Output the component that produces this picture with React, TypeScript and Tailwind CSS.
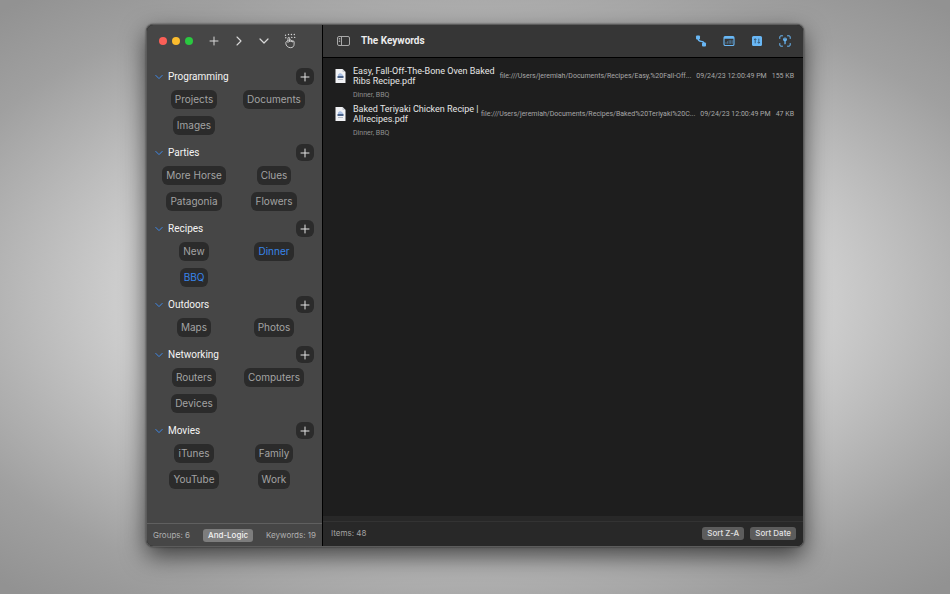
import React from "react";

type Keyword = { name: string; active?: boolean };
type Group = { name: string; keywords: Keyword[] };
type FileItem = {
  title: string[];
  tags: string;
  path: string;
  date: string;
  size: string;
};

const groups: Group[] = [
  { name: "Programming", keywords: [{ name: "Projects" }, { name: "Documents" }, { name: "Images" }] },
  { name: "Parties", keywords: [{ name: "More Horse" }, { name: "Clues" }, { name: "Patagonia" }, { name: "Flowers" }] },
  { name: "Recipes", keywords: [{ name: "New" }, { name: "Dinner", active: true }, { name: "BBQ", active: true }] },
  { name: "Outdoors", keywords: [{ name: "Maps" }, { name: "Photos" }] },
  { name: "Networking", keywords: [{ name: "Routers" }, { name: "Computers" }, { name: "Devices" }] },
  { name: "Movies", keywords: [{ name: "iTunes" }, { name: "Family" }, { name: "YouTube" }, { name: "Work" }] },
];

const files: FileItem[] = [
  {
    title: ["Easy, Fall-Off-The-Bone Oven Baked", "Ribs Recipe.pdf"],
    tags: "Dinner, BBQ",
    path: "file:///Users/jeremiah/Documents/Recipes/Easy,%20Fall-Off...",
    date: "09/24/23 12:00:49 PM",
    size: "155 KB",
  },
  {
    title: ["Baked Teriyaki Chicken Recipe |", "Allrecipes.pdf"],
    tags: "Dinner, BBQ",
    path: "file:///Users/jeremiah/Documents/Recipes/Baked%20Teriyaki%20C...",
    date: "09/24/23 12:00:49 PM",
    size: "47 KB",
  },
];

function Plus({ className }: { className: string }) {
  return (
    <svg viewBox="0 0 10 10" className={className} fill="none" stroke="currentColor" strokeLinecap="round" aria-hidden="true">
      <path d="M5 1v8M1 5h8" />
    </svg>
  );
}

function ChevronRight() {
  return (
    <svg viewBox="0 0 10 10" className="size-[10px]" fill="none" stroke="currentColor" strokeWidth="1.1" strokeLinecap="round" strokeLinejoin="round" aria-hidden="true">
      <path d="M3 1l4 4-4 4" />
    </svg>
  );
}

function ChevronDown({ className }: { className: string }) {
  return (
    <svg viewBox="0 0 10 10" className={className} fill="none" stroke="currentColor" strokeWidth="1.2" strokeLinecap="round" strokeLinejoin="round" aria-hidden="true">
      <path d="M1 3l4 4 4-4" />
    </svg>
  );
}

function TapHand() {
  return (
    <svg viewBox="0 0 12 16" className="h-4 w-3" fill="none" stroke="currentColor" strokeWidth="0.9" strokeLinecap="round" strokeLinejoin="round" aria-hidden="true">
      <path d="M4 9.500V5.200a.8.800 0 0 1 1.600 0v3.200M5.600 8.400V7.600a.8.800 0 0 1 1.600 0v1M7.200 8.600V8a.8.800 0 0 1 1.500 0v.8M8.700 8.800a.7.700 0 0 1 1.400 0v2.400c0 2.200-1.400 3.500-3.400 3.500-2.800 0-4.900-2-4.900-4.500 0-1.300.8-2.200 2.200-2.600" />
      <g fill="currentColor" stroke="none">
        <circle cx="1.500" cy="2.200" r=".7" />
        <circle cx="4.500" cy="1.500" r=".7" />
        <circle cx="7.400" cy="1.500" r=".7" />
        <circle cx="10.300" cy="1.500" r=".7" />
        <circle cx="1.800" cy="4.800" r=".7" />
        <circle cx="7.800" cy="4.400" r=".7" />
        <circle cx="10.700" cy="4.400" r=".7" />
      </g>
    </svg>
  );
}

function SidebarIcon() {
  return (
    <svg viewBox="0 0 13 10" className="h-[10px] w-[13px]" fill="none" stroke="currentColor" strokeWidth="1" aria-hidden="true">
      <rect x=".5" y=".5" width="12" height="9" rx="1.500" />
      <path d="M4.500.5v9M1.800 2.500h1.400M1.800 4h1.400M1.800 5.500h1.400" />
    </svg>
  );
}

function PathIcon() {
  return (
    <svg viewBox="0 0 12 12" className="size-3" fill="currentColor" aria-hidden="true">
      <rect x="1" y=".5" width="4" height="4" rx="1" />
      <rect x="7" y="7.500" width="4" height="4" rx="1" />
      <path d="M3 3.500c0 5 6 1 6 5" fill="none" stroke="currentColor" strokeWidth="1.200" />
    </svg>
  );
}

function CalendarIcon() {
  return (
    <svg viewBox="0 0 12 12" className="size-3" fill="none" stroke="currentColor" aria-hidden="true">
      <rect x="1" y="1.500" width="10" height="9" rx="1.300" strokeWidth="1.100" />
      <path d="M1 2.800h10" strokeWidth="2" />
      <path d="M3 8.800V7.200M4.600 8.800V6.200M6.200 8.800V5.200M7.700 8.800V5.200M9.200 8.800V5.200" strokeWidth=".8" opacity=".6" />
    </svg>
  );
}

function SortIcon() {
  return (
    <svg viewBox="0 0 12 12" className="size-3" fill="none" aria-hidden="true">
      <rect x="1" y="1" width="10" height="10" rx="1.500" fill="currentColor" />
      <path d="M4.200 8.300V3.800M3 5l1.200-1.300L5.400 5M7.800 3.700v4.500M6.600 7l1.200 1.300L9 7" stroke="#2f4a60" strokeWidth=".8" />
    </svg>
  );
}

function KeyScanIcon() {
  return (
    <svg viewBox="0 0 12 12" className="size-3" fill="none" stroke="currentColor" strokeLinecap="round" aria-hidden="true">
      <path d="M.8 3.500V2A1.200 1.200 0 0 1 2 .8h1.500M8.500.8H10A1.200 1.200 0 0 1 11.200 2v1.500M11.200 8.500V10a1.200 1.200 0 0 1-1.200 1.200H8.500M3.500 11.200H2A1.200 1.200 0 0 1 .8 10V8.500" />
      <path d="M5.400 5.500h1.300v3.200l-.7.8-.6-.6z" fill="currentColor" stroke="none" />
      <circle cx="6" cy="4.400" r="1.900" fill="currentColor" stroke="none" />
      <circle cx="6" cy="3.700" r=".5" fill="#363636" stroke="none" />
    </svg>
  );
}

function PdfIcon() {
  return (
    <svg viewBox="0 0 11 14" className="h-[14px] w-[11px] shrink-0" aria-hidden="true">
      <path d="M.5 0h7L10.500 3v11H.5z" fill="#f1f2f5" />
      <path d="M7.500 0v3h3z" fill="#c9ccd2" />
      <path d="M3 5.500 5 4l2 1 1.200 1.500V8H3z" fill="#a9bfe2" />
      <rect x="2.500" y="7" width="6" height="2" fill="#4a6288" />
      <path d="M3 10h5v1H3z" fill="#b4bac6" />
    </svg>
  );
}

function GroupSection({ group }: { group: Group }) {
  return (
    <section>
      <div className="flex h-[17px] items-center">
        <button type="button" className="flex flex-1 items-center gap-1 text-left font-['Roboto','Inter',sans-serif] text-[10px] leading-[17px] text-[#f4f4f4]">
          <ChevronDown className="mx-px size-2 text-[#3f8cf0]" />
          <h2>{group.name}</h2>
        </button>
        <button type="button" aria-label={`Add keyword to ${group.name}`} className="flex h-[17px] w-[18px] items-center justify-center rounded-[6px] bg-[#2b2b2b] text-[#e4e4e4]">
          <Plus className="size-[10px]" />
        </button>
      </div>
      <ul className="mt-[5px] grid grid-cols-2 gap-y-[7px]">
        {group.keywords.map((k) => (
          <li key={k.name} className="flex justify-center">
            <button
              type="button"
              aria-pressed={!!k.active}
              className={`h-[19px] rounded-[6px] bg-[#2b2b2b] px-1 text-[10px] leading-[19px] whitespace-nowrap ${k.active ? "text-[#3885ea]" : "text-[#a3a3a3]"}`}
            >
              {k.name}
            </button>
          </li>
        ))}
      </ul>
    </section>
  );
}

function FileRow({ file }: { file: FileItem }) {
  return (
    <li className="flex items-start gap-[7px] font-['Roboto','Inter',sans-serif]">
      <div className="flex min-w-0 flex-1 gap-[7px]">
        <div className="pt-[3px]">
          <PdfIcon />
        </div>
        <div className="shrink-0 whitespace-nowrap">
          <h3 className="text-[9px] leading-[10px] text-[#e6e6e6]">
            {file.title.map((line) => (
              <span key={line} className="block">{line}</span>
            ))}
          </h3>
          <p className="mt-1 text-[7px] leading-[10px] text-[#8f8f8f]">{file.tags}</p>
        </div>
      </div>
      <div className="flex shrink-0 gap-[5px] text-[7px] leading-5 whitespace-nowrap text-[#a8a8a8]">
        <a href="#file">{file.path}</a>
        <span>{file.date}</span>
        <span>{file.size}</span>
      </div>
    </li>
  );
}

export default function App() {
  return (
    <div className="flex min-h-screen bg-[radial-gradient(ellipse_73%_66%_at_center,#dadada_0%,#d4d4d4_40%,#cccccc_52%,#b2b2b2_70%,#a0a0a0_83%,#929292_100%)] px-[146px] pt-6 pb-[47px] font-['Inter','Liberation_Sans',sans-serif] antialiased">
      <div className="flex min-w-0 flex-1 overflow-hidden rounded-[7px] border border-[#5c5c5c] bg-[#1e1e1e] shadow-[0_9px_24px_rgba(0,0,0,0.65),0_0_2px_rgba(0,0,0,0.6)]">
        <aside className="flex w-44 shrink-0 flex-col border-r border-black bg-[#464646]">
          <header className="flex h-8 items-center pl-3 text-[#d8d8d8]">
            <div className="flex gap-[5px]">
              <button type="button" aria-label="Close" className="size-2 rounded-full bg-[#fb5f57]" />
              <button type="button" aria-label="Minimize" className="size-2 rounded-full bg-[#fbbc2e]" />
              <button type="button" aria-label="Zoom" className="size-2 rounded-full bg-[#2ac840]" />
            </div>
            <div className="ml-4 flex items-center gap-[15px]">
              <button type="button" aria-label="New group"><Plus className="size-[10px]" /></button>
              <button type="button" aria-label="Collapse all"><ChevronRight /></button>
              <button type="button" aria-label="Expand all"><ChevronDown className="size-[10px]" /></button>
              <button type="button" aria-label="Tap mode"><TapHand /></button>
            </div>
          </header>
          <div className="flex flex-1 flex-col gap-[9px] pt-[11px] pr-2 pl-[7px]">
            {groups.map((g) => (
              <GroupSection key={g.name} group={g} />
            ))}
          </div>
          <footer className="flex h-[23px] items-center justify-between border-t border-[#606060] px-[6px] text-[8px] text-[#b0b0b0]">
            <span>Groups: 6</span>
            <button type="button" className="h-[13px] rounded-[3px] bg-[#7d7d7d] px-[5px] leading-[13px] font-medium text-[#f2f2f2]">And-Logic</button>
            <span>Keywords: 19</span>
          </footer>
        </aside>
        <main className="flex min-w-0 flex-1 flex-col">
          <header className="flex h-[33px] items-center border-b border-black bg-[#363636] pr-3 pb-px pl-[14px]">
            <button type="button" aria-label="Toggle sidebar" className="text-[#a8a8a8]"><SidebarIcon /></button>
            <h1 className="ml-[11px] flex-1 font-['Roboto','Inter',sans-serif] text-[10px] font-bold text-[#ececec]">The Keywords</h1>
            <div className="flex gap-4 text-[#69b7f5]">
              <button type="button" aria-label="Show path"><PathIcon /></button>
              <button type="button" aria-label="Show date"><CalendarIcon /></button>
              <button type="button" aria-label="Show size"><SortIcon /></button>
              <button type="button" aria-label="Show keywords"><KeyScanIcon /></button>
            </div>
          </header>
          <ul className="flex flex-1 flex-col gap-1 pt-2 pr-[9px] pl-3">
            {files.map((f) => (
              <FileRow key={f.title[0]} file={f} />
            ))}
          </ul>
          <footer className="bg-[#282828]">
            <div className="h-[6px] border-b border-[#333333]" />
            <div className="flex h-6 items-center justify-between pr-[7px] pb-[2px] pl-2 text-[8px]">
              <span className="text-[#a3a3a3]">Items: 48</span>
              <div className="flex gap-[6px] font-medium text-[#e2e2e2]">
                <button type="button" className="h-[13px] rounded-[3px] bg-[#5c5c5c] px-[5px] leading-[13px]">Sort Z-A</button>
                <button type="button" className="h-[13px] rounded-[3px] bg-[#5c5c5c] px-[5px] leading-[13px]">Sort Date</button>
              </div>
            </div>
          </footer>
        </main>
      </div>
    </div>
  );
}
